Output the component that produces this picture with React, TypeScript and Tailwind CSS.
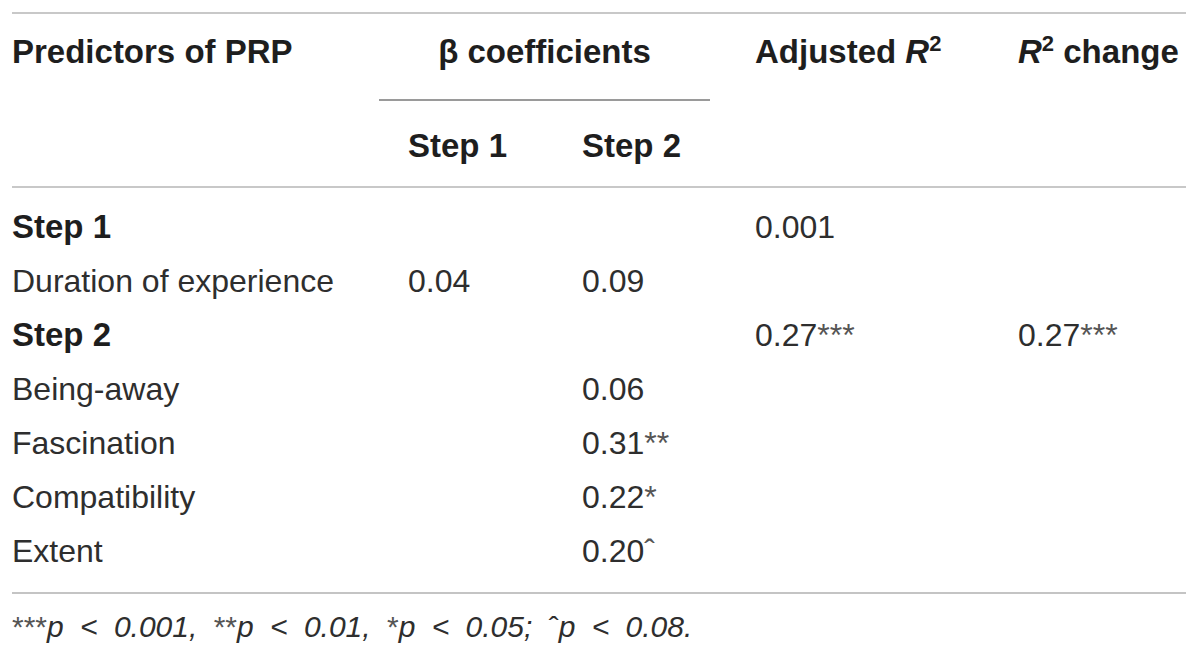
import React from "react";

const font = { fontFamily: '"Liberation Sans", Arial, sans-serif' };

function Sup({ children }: { children: React.ReactNode }) {
  return <span className="relative top-[-12px] text-[22px] not-italic">{children}</span>;
}

const rows: { label: string; bold?: boolean; s1?: string; s2?: string; adj?: string; ch?: string }[] = [
  { label: "Step 1", bold: true, adj: "0.001" },
  { label: "Duration of experience", s1: "0.04", s2: "0.09" },
  { label: "Step 2", bold: true, adj: "0.27***", ch: "0.27***" },
  { label: "Being-away", s2: "0.06" },
  { label: "Fascination", s2: "0.31**" },
  { label: "Compatibility", s2: "0.22*" },
  { label: "Extent", s2: "0.20ˆ" },
];

function Val({ v }: { v?: string }) {
  if (!v) return null;
  const m = v.match(/^([0-9.]+)(.*)$/);
  if (!m) return <>{v}</>;
  return (
    <>
      {m[1]}
      {m[2] && <span className="text-[#555]">{m[2]}</span>}
    </>
  );
}

export default function App() {
  return (
    <div className="w-[1200px] h-[655px] bg-white pt-[12px] px-[12px] text-[#222]" style={font}>
      <div className="w-[1174px]">
        {/* Header */}
        <div className="border-t-2 border-b-2 border-[#c8c8c8] grid grid-cols-[367px_166px_165px_308px_168px] text-[33px] leading-[38px] font-bold text-[#1e1e1e]">
          <div className="row-span-3 pt-[19px]">Predictors of PRP</div>
          <div className="col-span-2 h-[85px] pt-[19px] text-center">β coefficients</div>
          <div className="row-span-3 pt-[19px] pl-[45px]">
            Adjusted <i>R</i>
            <Sup>2</Sup>
          </div>
          <div className="row-span-3 pt-[19px] whitespace-nowrap">
            <i>R</i>
            <Sup>2</Sup> change
          </div>
          <div className="col-span-2 h-[2px] bg-[#9a9a9a]"></div>
          <div className="h-[85px] pt-[26px] pl-[29px]">Step 1</div>
          <div className="h-[85px] pt-[26px] pl-[37px]">Step 2</div>
        </div>
        {/* Body */}
        <div className="pt-[12px] pb-[14px] border-b-2 border-[#c4c4c4]">
          {rows.map((r) => (
            <div
              key={r.label}
              className="grid grid-cols-[367px_166px_165px_308px_168px] h-[54px] text-[32px] leading-[54px] text-[#2e2e2e]"
            >
              <div className={r.bold ? "font-bold text-[33px] text-[#1e1e1e]" : ""}>{r.label}</div>
              <div className="pl-[29px]">
                <Val v={r.s1} />
              </div>
              <div className="pl-[37px]">
                <Val v={r.s2} />
              </div>
              <div className="pl-[45px]">
                <Val v={r.adj} />
              </div>
              <div>
                <Val v={r.ch} />
              </div>
            </div>
          ))}
        </div>
        {/* Footnote */}
        <div className="pt-[14px] text-[30px] leading-[38px] italic text-[#2e2e2e] [word-spacing:8px] whitespace-nowrap">
          <span className="not-italic text-[#555]">***</span>p &lt; 0.001,{" "}
          <span className="not-italic text-[#555]">**</span>p &lt; 0.01,{" "}
          <span className="not-italic text-[#555]">*</span>p &lt; 0.05;{" "}
          <span className="not-italic">ˆ</span>p &lt; 0.08.
        </div>
      </div>
    </div>
  );
}
